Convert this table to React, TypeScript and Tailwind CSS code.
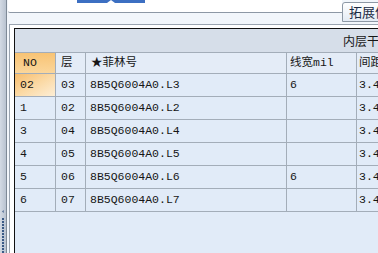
import React from "react";

const mono = { fontFamily: '"Liberation Mono", "Noto Sans CJK SC", monospace' };

const rows = [
  { no: "02", layer: "03", film: "8B5Q6004A0.L3", width: "6", gap: "3.4", active: true },
  { no: "1", layer: "02", film: "8B5Q6004A0.L2", width: "", gap: "3.4" },
  { no: "3", layer: "04", film: "8B5Q6004A0.L4", width: "", gap: "3.4" },
  { no: "4", layer: "05", film: "8B5Q6004A0.L5", width: "", gap: "3.4" },
  { no: "5", layer: "06", film: "8B5Q6004A0.L6", width: "6", gap: "3.4" },
  { no: "6", layer: "07", film: "8B5Q6004A0.L7", width: "", gap: "3.4" },
];

const cols = "grid grid-cols-[41px_30px_201px_70px_60px]";
const cell = "border-r border-b border-[#a3adb9] flex items-center whitespace-nowrap overflow-hidden";

function Splitter() {
  return (
    <div className="w-[7px] shrink-0 h-full border-r border-[#7f8a97] bg-gradient-to-r from-[#d3dae4] to-[#b9c3d0] flex flex-col items-center pt-[210px]">
      <svg width="4" height="7" viewBox="0 0 4 7" className="ml-[-1px]">
        <path d="M3.5 0 L0 3.5 L3.5 7 Z" fill="#3b5a86" />
      </svg>
      <div className="mt-[5px] flex flex-col gap-[1px]">
        {Array.from({ length: 12 }).map((_, i) => (
          <div key={i} className="w-[2px] h-[2px] bg-[#3b5a86]" />
        ))}
      </div>
    </div>
  );
}

export default function App() {
  return (
    <div className="w-[378px] h-[253px] overflow-hidden flex bg-[#f2f6fb] text-[#161616]" style={mono}>
      <Splitter />
      <div className="flex-1 flex flex-col min-w-0">
        {/* tab strip */}
        <div className="h-[24px] shrink-0 flex items-start">
          <div className="w-[334px] shrink-0 h-[13px] border-b border-[#8d98a5] ml-[1px] rounded-bl-[2px] bg-white">
            <svg width="68" height="3" viewBox="0 0 68 3" className="ml-[69px] block">
              <rect x="0" y="0" width="68" height="3" fill="#3c6fc2" />
              <path d="M30 3 L34 0 L38 3 Z" fill="#ffffff" />
            </svg>
          </div>
          <div className="w-[60px] shrink-0 h-[20px] mt-[2px] border border-[#8d98a5] rounded-tl-[3px] bg-gradient-to-b from-[#ffffff] to-[#e4ebf4] pl-[6px] flex items-center text-[13px] text-[#1a2a44] whitespace-nowrap" style={{ fontFamily: '"Noto Sans CJK SC", sans-serif' }}>
            拓展信息
          </div>
        </div>

        {/* panel */}
        <div className="flex-1 ml-[2px] border-l border-t border-[#9aa4b0] bg-white pl-[4px] pt-[3px] flex flex-col min-h-0">
          <div className="flex-1 border-l border-t border-[#111] bg-[#e1ebf8] text-[11.5px] overflow-hidden">
            <div className="h-[24px] border-b border-[#a3adb9] bg-[#d6dee9] flex items-center pl-[328px] whitespace-nowrap text-[12px]" style={{ fontFamily: '"Noto Sans CJK SC", sans-serif' }}>
              内层干膜参数
            </div>
            <div className={`${cols} h-[21px] bg-[#e4ecf7]`}>
              <div className={`${cell} pl-[8px] bg-gradient-to-b from-[#f8c374] to-[#fbd69a]`}>NO</div>
              <div className={`${cell} pl-[5px]`}>层</div>
              <div className={`${cell} pl-[5px]`}>★菲林号</div>
              <div className={`${cell} pl-[3px]`}>线宽mil</div>
              <div className={`${cell} pl-[2px]`}>间距</div>
            </div>
            {rows.map((r) => (
              <div key={r.no} className={`${cols} h-[23px]`}>
                <div className={`${cell} pl-[5px] ${r.active ? "bg-gradient-to-br from-[#f7bd6c] via-[#fbd9a4] to-[#fdeed6]" : ""}`}>{r.no}</div>
                <div className={`${cell} pl-[5px]`}>{r.layer}</div>
                <div className={`${cell} pl-[4px]`}>{r.film}</div>
                <div className={`${cell} pl-[3px]`}>{r.width}</div>
                <div className={`${cell} pl-[2px]`}>{r.gap}</div>
              </div>
            ))}
          </div>
        </div>
      </div>
    </div>
  );
}
